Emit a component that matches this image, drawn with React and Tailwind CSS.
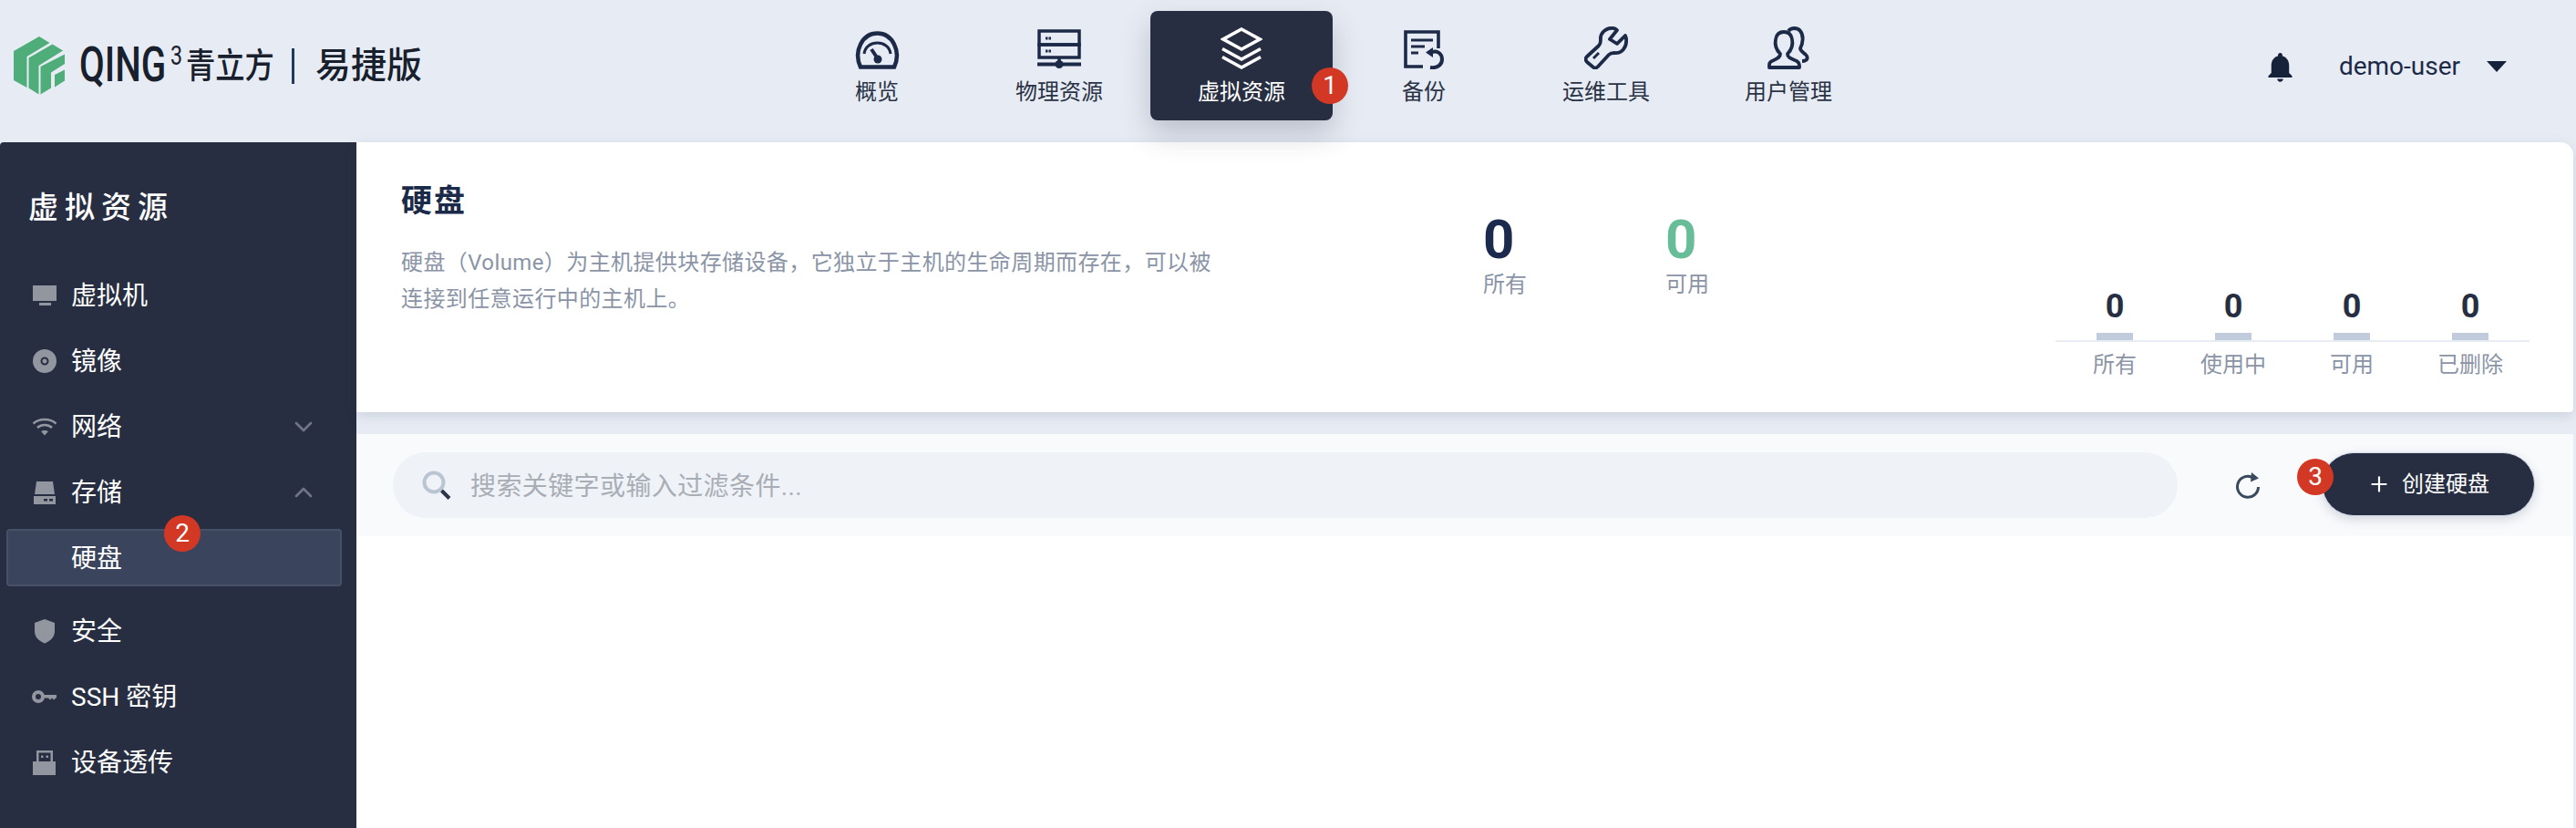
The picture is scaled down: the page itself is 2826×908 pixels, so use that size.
import { ChevronDown, ChevronUp, Plus } from 'lucide-react'

function Badge({ n, className }) {
  return (
    <span className={`absolute flex h-10 w-10 items-center justify-center rounded-full bg-[#d33824] text-[28px] leading-none text-white ${className}`}>
      {n}
    </span>
  )
}

function Logo() {
  return (
    <div className="flex h-[144px] w-[862px] items-center pl-[15px] text-[#17202c]">
      <svg width="56" height="64" viewBox="0 0 56 64" className="shrink-0" fill="#4fad7a">
        <polygon points="28,0 39.5,7 14.5,22 14.5,56 0,48 0,16" />
        <polygon points="16.5,23.5 42.5,8.5 54,15.5 27.5,32 27.5,63.5 16.5,56.5" />
        <polygon points="56,19.5 56,30 41,39.5 41,56.5 29.5,63.5 29.5,33" />
        <polygon points="45,42 56,36.5 56,48.5 45,55.5" />
      </svg>
      <div className="relative ml-[16px] h-[40px] w-[97px]">
        <span className="absolute left-0 top-[-7px] origin-left scale-x-[0.76] text-[53px] leading-[53px] font-medium">QING</span>
      </div>
      <span className="mb-[22px] ml-[3px] w-[17px] origin-left scale-x-[0.8] text-[29px] leading-none">3</span>
      <span className="w-[99px] origin-left scale-x-[0.85] text-[38px] leading-none font-medium whitespace-nowrap">青立方</span>
      <span className="ml-[17px] h-[39px] w-[3px] bg-[#1f3a5c]" />
      <span className="ml-[23px] text-[39px] leading-none font-medium whitespace-nowrap">易捷版</span>
    </div>
  )
}

function GaugeIcon() {
  return (
    <svg width="51" height="42" viewBox="0 0 51 42" fill="none" stroke="currentColor" strokeWidth="4.5">
      <path d="M7 39.5 C-1 22 9 2.5 25.5 2.5 C42 2.5 52 22 44 39.5 Z" />
      <path d="M11 25 C13 9 38 9 40 25" strokeWidth="3" />
      <path d="M19 20 L25 29" strokeWidth="4" />
      <circle cx="26" cy="31" r="4.5" fill="currentColor" stroke="none" />
    </svg>
  )
}

function ServerIcon() {
  return (
    <svg width="48" height="44" viewBox="0 0 48 44" fill="none" stroke="currentColor" strokeWidth="3.5">
      <rect x="2" y="2" width="44" height="15" />
      <rect x="2" y="17" width="44" height="14" />
      <path d="M9 10 H15 M9 24 H15" strokeWidth="3" strokeDasharray="2.5 1" />
      <path d="M24 31 V38" />
      <path d="M0 38.5 H48" strokeWidth="4" />
      <circle cx="24" cy="38.5" r="4.5" fill="currentColor" stroke="none" />
    </svg>
  )
}

function LayersIcon() {
  return (
    <svg width="46" height="46" viewBox="0 0 46 46" fill="none" stroke="currentColor" strokeWidth="3.6">
      <polygon points="23,2 43,13 23,24 3,13" />
      <path d="M2 23.5 L23 35 L44 23.5" />
      <path d="M2 32.5 L23 44 L44 32.5" />
    </svg>
  )
}

function BackupIcon() {
  return (
    <svg width="44" height="43" viewBox="0 0 44 43" fill="none" stroke="currentColor" strokeWidth="3.6">
      <path d="M38 20 V2 H2 V40 H21" />
      <path d="M8 11 H32 M8 18 H23 M8 25 H16" strokeWidth="3" />
      <path d="M31 24 C37 22 42 26 42 32 C42 38 37 42 29 41" strokeWidth="4" />
      <polygon points="24,24.5 32,19 32,30" fill="currentColor" stroke="none" />
    </svg>
  )
}

function WrenchIcon() {
  return (
    <svg width="48" height="47" viewBox="0 0 48 47" fill="none" stroke="currentColor" strokeWidth="3.8" strokeLinejoin="round">
      <path d="M32 2 C24 1 17 7 18 15 C18 18 18 19 16 21 L3 33 C1 35 1 37 3 39 L9 44 C11 46 13 46 15 44 L27 31 C29 29 31 29 33 29 C41 30 47 23 46 14 C46 12 45.5 11 45 10 L36 19 L28 14 L36 4 C35 3 34 2 32 2 Z" />
      <path d="M10 35 L16 29" strokeWidth="3" />
    </svg>
  )
}

function UsersIcon() {
  return (
    <svg width="46" height="47" viewBox="0 0 46 47" fill="none" stroke="currentColor" strokeWidth="3.8" strokeLinejoin="round">
      <path d="M14 30 C9 25 8 19 9 14 C10 8 14 6 18 6 C22 6 26 8 27 14 C28 19 27 25 22 30 C22 34 25 35 30 37 C33 38 35 40 35 43 L35 45 L2 45 L2 42 C2 40 4 38 7 37 C11 35 14 34 14 30 Z" />
      <path d="M23 5 C26 1 33 1 36 5 C40 10 39 18 36 24 C36 27 39 28 42 31 C45 34 44 38 38 38" />
    </svg>
  )
}

const navItems = [
  { label: '概览', icon: <GaugeIcon /> },
  { label: '物理资源', icon: <ServerIcon /> },
  { label: '虚拟资源', icon: <LayersIcon />, active: true },
  { label: '备份', icon: <BackupIcon /> },
  { label: '运维工具', icon: <WrenchIcon /> },
  { label: '用户管理', icon: <UsersIcon /> },
]

function TopNav() {
  return (
    <nav className="flex h-full">
      {navItems.map((item) => (
        <div key={item.label} className="flex w-[200px] flex-col items-center pt-[12px]">
          <div
            className={`relative flex h-[120px] w-[200px] flex-col items-center rounded-lg ${
              item.active ? 'bg-[#282e41] text-white shadow-[0_14px_32px_rgba(40,46,65,0.24)]' : 'text-[#1c2a48]'
            }`}
          >
            <div className="mt-[12px] flex h-[52px] w-full items-end justify-center">{item.icon}</div>
            <span className={`mt-[9px] text-[24px] leading-[32px] ${item.active ? 'text-white' : 'text-[#2a3246]'}`}>{item.label}</span>
            {item.active && <Badge n="1" className="left-[177px] top-[62px]" />}
          </div>
        </div>
      ))}
    </nav>
  )
}

function MonitorIcon() {
  return (
    <svg width="28" height="26" viewBox="0 0 28 26" fill="currentColor">
      <rect x="1" y="2" width="26" height="17" />
      <rect x="8" y="21" width="13" height="3" />
    </svg>
  )
}
function DiscIcon() {
  return (
    <svg width="28" height="28" viewBox="0 0 28 28">
      <circle cx="14" cy="14" r="13" fill="currentColor" />
      <circle cx="14" cy="14" r="3.5" fill="none" stroke="#282e41" strokeWidth="2" />
    </svg>
  )
}
function WifiIcon() {
  return (
    <svg width="28" height="22" viewBox="0 0 28 22" fill="none" stroke="currentColor" strokeWidth="2.6">
      <path d="M1.5 7.5 C8 1.5 20 1.5 26.5 7.5" />
      <path d="M6 12 C10.5 8 17.5 8 22 12" />
      <path d="M10 16 C12 14.5 16 14.5 18 16 L14 20.5 Z" fill="currentColor" stroke="none" />
    </svg>
  )
}
function DriveIcon() {
  return (
    <svg width="28" height="26" viewBox="0 0 28 26" fill="currentColor">
      <polygon points="5,1 23,1 25,15 3,15" />
      <rect x="2" y="17" width="24" height="9" />
      <rect x="13" y="20" width="4" height="2.5" fill="#282e41" />
      <rect x="19" y="20" width="4" height="2.5" fill="#282e41" />
    </svg>
  )
}
function ShieldIcon() {
  return (
    <svg width="24" height="28" viewBox="0 0 24 28" fill="currentColor">
      <path d="M12 1 L23 5 V14 C23 21 18 25 12 27.5 C6 25 1 21 1 14 V5 Z" />
    </svg>
  )
}
function KeyIcon() {
  return (
    <svg width="28" height="16" viewBox="0 0 28 16" fill="none">
      <circle cx="7" cy="8" r="5" stroke="currentColor" strokeWidth="4" />
      <path d="M13 6 H27 V9 L24 11.5 L22 9.5 L20 11.5 L18 9.5 H13 Z" fill="currentColor" />
    </svg>
  )
}
function UsbIcon() {
  return (
    <svg width="28" height="28" viewBox="0 0 28 28" fill="currentColor">
      <path fillRule="evenodd" d="M5 1 H23 V13 H26 V28 H1 V13 H5 Z M7.5 3.5 V13 H20.5 V3.5 Z" />
      <rect x="10" y="6.5" width="2.5" height="2.5" />
      <rect x="15.5" y="6.5" width="2.5" height="2.5" />
    </svg>
  )
}

function SideItem({ icon, label, chevron }) {
  return (
    <div className="flex h-[72px] items-center pl-[35px] pr-[42px]">
      <span className="flex w-[28px] items-center justify-center text-[#92969f]">{icon}</span>
      <span className="ml-[15px] flex-1 pt-[2px] text-[28px] leading-none text-white">{label}</span>
      {chevron === 'down' && <ChevronDown size={32} strokeWidth={2} className="text-[#6f7585]" />}
      {chevron === 'up' && <ChevronUp size={32} strokeWidth={2} className="text-[#6f7585]" />}
    </div>
  )
}

function Sidebar() {
  return (
    <aside className="w-[391px] shrink-0 rounded-tl-[4px] bg-[#282e41] pt-[49px]">
      <h2 className="pl-[31px] text-[33px] leading-[46px] font-medium tracking-[7px] text-white">虚拟资源</h2>
      <div className="mt-[37px]">
        <SideItem icon={<MonitorIcon />} label="虚拟机" />
        <SideItem icon={<DiscIcon />} label="镜像" />
        <SideItem icon={<WifiIcon />} label="网络" chevron="down" />
        <SideItem icon={<DriveIcon />} label="存储" chevron="up" />
        <div className="relative mx-[7px] mt-[4px] flex h-[63px] w-[368px] items-center rounded-[4px] border-2 border-[#465069] bg-[#3a445c] pl-[69px] pt-[2px] text-[28px] leading-none text-white">
          硬盘
          <Badge n="2" className="left-[171px] top-[-17px]" />
        </div>
        <div className="mt-[13px]">
          <SideItem icon={<ShieldIcon />} label="安全" />
          <SideItem icon={<KeyIcon />} label="SSH 密钥" />
          <SideItem icon={<UsbIcon />} label="设备透传" />
        </div>
      </div>
    </aside>
  )
}

function BigStat({ value, label, color }) {
  return (
    <div className="w-[200px] pt-[77px]">
      <div className={`text-[60px] leading-[60px] font-bold ${color}`}>{value}</div>
      <div className="mt-[3px] text-[24px] leading-[32px] text-[#8a94a6]">{label}</div>
    </div>
  )
}

const smallStats = ['所有', '使用中', '可用', '已删除']

function SmallStats() {
  return (
    <div className="ml-[228px] w-[520px] pt-[160px]">
      <div className="flex border-b-2 border-[#e8ecf3]">
        {smallStats.map((label) => (
          <div key={label} className="flex w-[130px] flex-col items-center">
            <div className="text-[36px] leading-[40px] font-bold text-[#282e41]">0</div>
            <div className="mt-[9px] h-[8px] w-[40px] bg-[#c0cbdb]" />
          </div>
        ))}
      </div>
      <div className="mt-[9px] flex">
        {smallStats.map((label) => (
          <div key={label} className="w-[130px] text-center text-[24px] leading-[32px] text-[#8a94a6]">{label}</div>
        ))}
      </div>
    </div>
  )
}

function SummaryCard() {
  return (
    <section className="flex h-[296px] rounded-tr-[14px] rounded-br-[4px] bg-white pl-[49px] shadow-[0_4px_14px_rgba(60,75,105,0.16)]">
      <div className="w-[1187px] pt-[44px]">
        <h1 className="text-[34px] leading-[40px] font-bold tracking-[2px] text-[#1c2a4a]">硬盘</h1>
        <p className="mt-[28px] w-[900px] text-[24px] leading-[40px] tracking-[0.4px] text-[#8a94a6]">
          硬盘（Volume）为主机提供块存储设备，它独立于主机的生命周期而存在，可以被连接到任意运行中的主机上。
        </p>
      </div>
      <BigStat value="0" label="所有" color="text-[#1c2a4d]" />
      <BigStat value="0" label="可用" color="text-[#66bd97]" />
      <SmallStats />
    </section>
  )
}

function SearchIcon() {
  return (
    <svg width="32" height="32" viewBox="0 0 32 32" fill="none" className="shrink-0">
      <circle cx="13" cy="13" r="10.5" stroke="#b9c5d2" strokeWidth="4" />
      <path d="M21.5 22 L30 30.5" stroke="#2b3548" strokeWidth="4" />
    </svg>
  )
}

function RefreshIcon() {
  return (
    <svg width="28" height="30" viewBox="0 0 28 30" fill="none">
      <path d="M20 7 A11.5 11.5 0 1 0 25.5 17" stroke="#3a4a5e" strokeWidth="3" />
      <polygon points="18,1 26,7.5 17,11.5" fill="#3a4a5e" />
    </svg>
  )
}

function Toolbar() {
  return (
    <div className="mt-[24px] flex h-[112px] items-center bg-[#f9fafc] pl-[40px] pr-[42px]">
      <div className="flex h-[72px] w-[1958px] items-center rounded-full bg-[#eff2f7] pl-[32px]">
        <SearchIcon />
        <span className="ml-[21px] pt-[4px] text-[28px] leading-none tracking-[0.4px] text-[#a9adb5]">搜索关键字或输入过滤条件...</span>
      </div>
      <div className="ml-[63px] flex w-[28px] justify-center">
        <RefreshIcon />
      </div>
      <button className="relative ml-[67px] mb-[2px] flex h-[70px] w-[234px] items-center justify-center gap-[12px] rounded-full border border-[#d5dce8] bg-[#282e41] text-[24px] text-white shadow-[0_4px_12px_rgba(60,75,105,0.2)]">
        <Plus size={26} strokeWidth={2} />
        创建硬盘
        <Badge n="3" className="left-[-28px] top-[6px]" />
      </button>
    </div>
  )
}

export default function App() {
  return (
    <div className="flex h-screen flex-col overflow-hidden bg-[#e7ecf4] font-['Roboto','Noto_Sans_CJK_SC',sans-serif]">
      <header className="flex h-[156px] shrink-0 items-start">
        <Logo />
        <TopNav />
        <div className="ml-auto flex h-[146px] items-center pr-[76px] text-[#1c2a48]">
          <svg width="39" height="39" viewBox="0 0 24 24" fill="#16213a">
            <path d="M12 22c1.1 0 2-.9 2-2h-4c0 1.1.9 2 2 2zm6-6v-5c0-3.07-1.63-5.64-4.5-6.32V4c0-.83-.67-1.5-1.5-1.5s-1.5.67-1.5 1.5v.68C7.64 5.36 6 7.92 6 11v5l-2 2v1h16v-1l-2-2z" />
          </svg>
          <span className="ml-[45px] text-[28px] leading-none">demo-user</span>
          <svg width="22" height="12" viewBox="0 0 22 12" fill="#16213a" className="ml-[29px]">
            <polygon points="0,0 22,0 11,12" />
          </svg>
        </div>
      </header>
      <div className="flex min-h-0 flex-1">
        <Sidebar />
        <main className="mr-[3px] flex flex-1 flex-col">
          <SummaryCard />
          <Toolbar />
          <div className="flex-1 bg-white" />
        </main>
      </div>
    </div>
  )
}
